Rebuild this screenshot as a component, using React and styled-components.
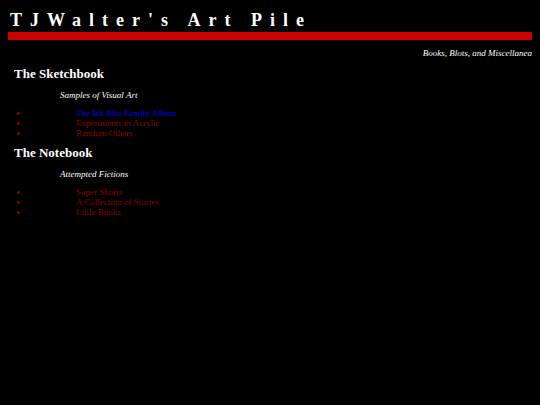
import React from "react";
import styled, { createGlobalStyle } from "styled-components";

const GlobalStyle = createGlobalStyle`
  body {
    margin: 0;
    background: #000;
    color: #fff;
    font-family: "Liberation Serif", "Times New Roman", serif;
    font-size: 9px;
    line-height: 10px;
  }
`;

const Page = styled.div`
  padding: 8px;
`;

const Title = styled.h1`
  margin: 0;
  padding: 2px;
  border-bottom: 8px solid #c00;
  font-size: 18px;
  line-height: 20px;
  font-weight: bold;
  letter-spacing: 8px;
  white-space: nowrap;
`;

const Tagline = styled.p`
  margin: 8px 0;
  text-align: right;
  font-style: italic;
`;

const Section = styled.section`
  padding: 0 6px;
  margin-bottom: 7px;
`;

const Heading = styled.h2`
  margin: 0;
  font-size: 13px;
  line-height: 16px;
`;

const Caption = styled.p`
  margin: 8px 0 8px 46px;
  font-style: italic;
`;

const LinkList = styled.ul`
  margin: 0;
  padding: 0;
  list-style: none;
`;

const Item = styled.li`
  display: flex;
  align-items: center;
  padding-left: 3px;

  &::before {
    content: "";
    width: 3px;
    height: 3px;
    margin-right: 56px;
    border-radius: 50%;
    background: #8b0000;
  }
`;

const Link = styled.a`
  color: ${({ $fresh }) => ($fresh ? "#0000e0" : "#8b0000")};
  text-decoration: none;
`;

const sections = [
  {
    title: "The Sketchbook",
    caption: "Samples of Visual Art",
    links: [
      { text: "The Ink Blot Family Album", fresh: true },
      { text: "Experiments in Acrylic" },
      { text: "Random Others" },
    ],
  },
  {
    title: "The Notebook",
    caption: "Attempted Fictions",
    links: [
      { text: "Super Shorts" },
      { text: "A Collection of Stories" },
      { text: "Little Books" },
    ],
  },
];

export default function App() {
  return (
    <Page>
      <GlobalStyle />
      <header>
        <Title>TJWalter's Art Pile</Title>
        <Tagline>Books, Blots, and Miscellanea</Tagline>
      </header>
      <main>
        {sections.map((section) => (
          <Section key={section.title}>
            <Heading>{section.title}</Heading>
            <Caption>{section.caption}</Caption>
            <LinkList>
              {section.links.map((link) => (
                <Item key={link.text}>
                  <Link href="#" $fresh={link.fresh}>
                    {link.text}
                  </Link>
                </Item>
              ))}
            </LinkList>
          </Section>
        ))}
      </main>
    </Page>
  );
}
